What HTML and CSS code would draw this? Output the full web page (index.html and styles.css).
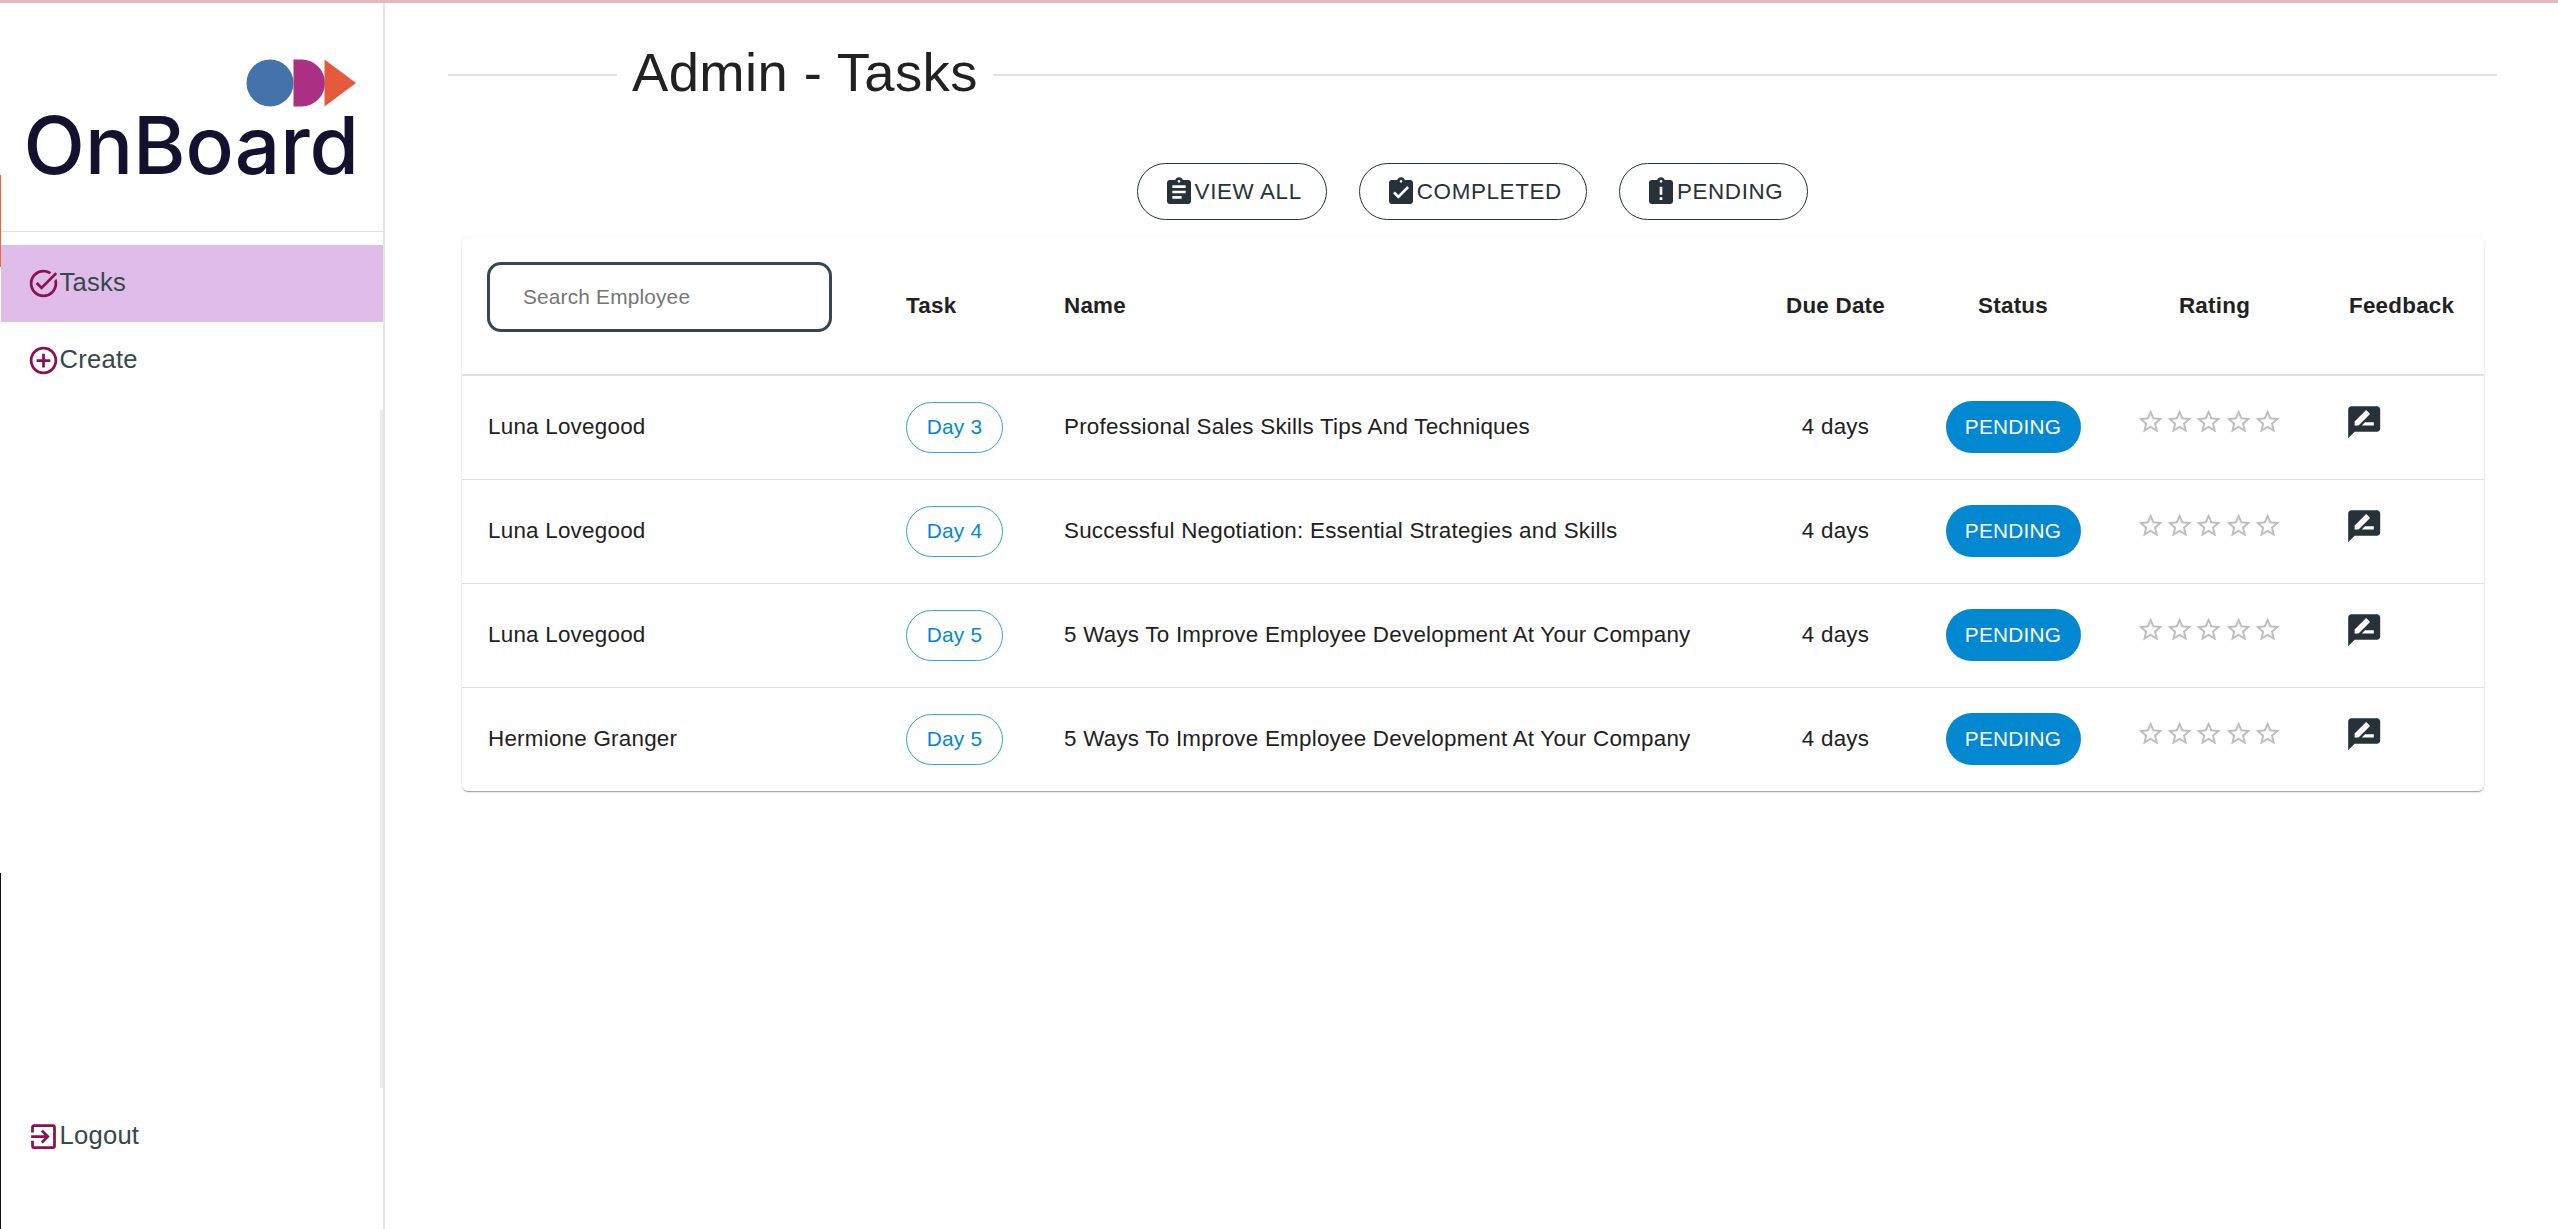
FILE: index.html
```html
<!DOCTYPE html>
<html lang="en">
<head>
<meta charset="utf-8">
<title>Admin - Tasks</title>
<link rel="stylesheet" href="styles.css">
</head>
<body>
<svg class="defs" aria-hidden="true">
  <symbol id="i-star" viewBox="0 0 24 24"><path d="M22 9.24l-7.19-.62L12 2 9.19 8.63 2 9.24l5.46 4.73L5.82 21 12 17.27 18.18 21l-1.63-7.03L22 9.24zM12 15.4l-3.76 2.27 1-4.28-3.32-2.88 4.38-.38L12 6.1l1.71 4.04 4.38.38-3.32 2.88 1 4.28L12 15.4z"/></symbol>
  <symbol id="i-review" viewBox="0 0 24 24"><path d="M20 2H4c-1.1 0-2 .9-2 2v18l4-4h14c1.1 0 2-.9 2-2V4c0-1.1-.9-2-2-2zM6 14v-2.47l6.88-6.88c.2-.2.51-.2.71 0l1.77 1.77c.2.2.2.51 0 .71L8.47 14H6zm12 0h-7.5l2-2H18v2z"/></symbol>
</svg>
<div class="app">
  <aside class="sidebar">
    <div class="logo">
      <svg class="logo-mark" viewBox="0 0 110 48" width="110" height="48">
        <circle cx="24" cy="24" r="23.5" fill="#4472aa"/>
        <path d="M47.5 .5h8a23.5 23.5 0 0 1 0 47h-8z" fill="#ab2f82"/>
        <path d="M78.5 .5L110 24 78.500 47.5z" fill="#e5593c"/>
      </svg>
      <div class="logo-word">OnBoard</div>
    </div>
    <nav class="nav">
      <a class="nav-item active">
        <svg class="nav-icon" viewBox="0 0 24 24"><path d="M22 5.18L10.59 16.6l-4.24-4.25 1.41-1.41 2.83 2.83 10-10L22 5.18zm-2.21 5.04c.13.57.21 1.17.21 1.78 0 4.42-3.58 8-8 8s-8-3.58-8-8 3.58-8 8-8c1.58 0 3.04.46 4.28 1.25l1.44-1.44C16.1 2.67 14.13 2 12 2 6.48 2 2 6.48 2 12s4.48 10 10 10 10-4.48 10-10c0-1.19-.22-2.33-.6-3.39l-1.61 1.61z"/></svg>
        <span class="nav-label">Tasks</span>
      </a>
      <a class="nav-item">
        <svg class="nav-icon" viewBox="0 0 24 24"><path d="M13 7h-2v4H7v2h4v4h2v-4h4v-2h-4V7zm-1-5C6.48 2 2 6.48 2 12s4.48 10 10 10 10-4.48 10-10S17.52 2 12 2zm0 18c-4.41 0-8-3.59-8-8s3.59-8 8-8 8 3.59 8 8-3.59 8-8 8z"/></svg>
        <span class="nav-label">Create</span>
      </a>
    </nav>
    <a class="nav-item logout">
      <svg class="nav-icon" viewBox="0 0 24 24"><path d="M10.09 15.59L11.5 17l5-5-5-5-1.41 1.41L12.67 11H3v2h9.67l-2.58 2.59zM19 3H5c-1.11 0-2 .9-2 2v4h2V5h14v14H5v-4H3v4c0 1.1.89 2 2 2h14c1.1 0 2-.9 2-2V5c0-1.1-.9-2-2-2z"/></svg>
      <span class="nav-label">Logout</span>
    </a>
  </aside>
  <main class="main">
    <header class="title-row">
      <span class="rule rule-left"></span>
      <h1 class="title">Admin - Tasks</h1>
      <span class="rule"></span>
    </header>
    <div class="filters">
      <button class="filter">
        <svg class="filter-icon" viewBox="0 0 24 24"><path d="M19 3h-4.18C14.4 1.84 13.3 1 12 1c-1.3 0-2.4.84-2.82 2H5c-1.1 0-2 .9-2 2v14c0 1.1.9 2 2 2h14c1.1 0 2-.9 2-2V5c0-1.1-.9-2-2-2zm-7 0c.55 0 1 .45 1 1s-.45 1-1 1-1-.45-1-1 .45-1 1-1zm2 14H7v-2h7v2zm3-4H7v-2h10v2zm0-4H7V7h10v2z"/></svg>
        <span>View All</span>
      </button>
      <button class="filter">
        <svg class="filter-icon" viewBox="0 0 24 24"><path d="M19 3h-4.18C14.4 1.84 13.3 1 12 1c-1.3 0-2.4.84-2.82 2H5c-1.1 0-2 .9-2 2v14c0 1.1.9 2 2 2h14c1.1 0 2-.9 2-2V5c0-1.1-.9-2-2-2zm-7 0c.55 0 1 .45 1 1s-.45 1-1 1-1-.45-1-1 .45-1 1-1zm-2 14l-4-4 1.41-1.41L10 14.17l6.59-6.59L18 9l-8 8z"/></svg>
        <span>Completed</span>
      </button>
      <button class="filter">
        <svg class="filter-icon" viewBox="0 0 24 24"><path d="M19 3h-4.18C14.4 1.84 13.3 1 12 1c-1.3 0-2.4.84-2.82 2H5c-1.1 0-2 .9-2 2v14c0 1.1.9 2 2 2h14c1.1 0 2-.9 2-2V5c0-1.1-.9-2-2-2zm-6 15h-2v-2h2v2zm0-4h-2V8h2v6zm-1-9c-.55 0-1-.45-1-1s.45-1 1-1 1 .45 1 1-.45 1-1 1z"/></svg>
        <span>Pending</span>
      </button>
    </div>
    <section class="card">
      <table class="tasks">
        <colgroup>
          <col class="c-emp"><col class="c-task"><col class="c-name"><col class="c-due"><col class="c-status"><col class="c-rating"><col class="c-feedback">
        </colgroup>
        <thead>
          <tr>
            <th><input class="search" type="text" placeholder="Search Employee"></th>
            <th>Task</th>
            <th>Name</th>
            <th class="center">Due Date</th>
            <th class="center">Status</th>
            <th class="center">Rating</th>
            <th class="feedback-head">Feedback</th>
          </tr>
        </thead>
        <tbody>
          <tr>
            <td>Luna Lovegood</td>
            <td><span class="chip">Day 3</span></td>
            <td>Professional Sales Skills Tips And Techniques</td>
            <td class="center">4 days</td>
            <td class="center"><span class="pill">PENDING</span></td>
            <td class="rating"><div class="stars"><svg><use href="#i-star"/></svg><svg><use href="#i-star"/></svg><svg><use href="#i-star"/></svg><svg><use href="#i-star"/></svg><svg><use href="#i-star"/></svg></div></td>
            <td class="feedback"><svg class="review"><use href="#i-review"/></svg></td>
          </tr>
          <tr>
            <td>Luna Lovegood</td>
            <td><span class="chip">Day 4</span></td>
            <td>Successful Negotiation: Essential Strategies and Skills</td>
            <td class="center">4 days</td>
            <td class="center"><span class="pill">PENDING</span></td>
            <td class="rating"><div class="stars"><svg><use href="#i-star"/></svg><svg><use href="#i-star"/></svg><svg><use href="#i-star"/></svg><svg><use href="#i-star"/></svg><svg><use href="#i-star"/></svg></div></td>
            <td class="feedback"><svg class="review"><use href="#i-review"/></svg></td>
          </tr>
          <tr>
            <td>Luna Lovegood</td>
            <td><span class="chip">Day 5</span></td>
            <td>5 Ways To Improve Employee Development At Your Company</td>
            <td class="center">4 days</td>
            <td class="center"><span class="pill">PENDING</span></td>
            <td class="rating"><div class="stars"><svg><use href="#i-star"/></svg><svg><use href="#i-star"/></svg><svg><use href="#i-star"/></svg><svg><use href="#i-star"/></svg><svg><use href="#i-star"/></svg></div></td>
            <td class="feedback"><svg class="review"><use href="#i-review"/></svg></td>
          </tr>
          <tr>
            <td>Hermione Granger</td>
            <td><span class="chip">Day 5</span></td>
            <td>5 Ways To Improve Employee Development At Your Company</td>
            <td class="center">4 days</td>
            <td class="center"><span class="pill">PENDING</span></td>
            <td class="rating"><div class="stars"><svg><use href="#i-star"/></svg><svg><use href="#i-star"/></svg><svg><use href="#i-star"/></svg><svg><use href="#i-star"/></svg><svg><use href="#i-star"/></svg></div></td>
            <td class="feedback"><svg class="review"><use href="#i-review"/></svg></td>
          </tr>
        </tbody>
      </table>
    </section>
  </main>
</div>
</body>
</html>
```

FILE: styles.css
```css
* { box-sizing: border-box; }
html, body { margin: 0; height: 1229px; overflow: hidden; }
body {
  background: #fff;
  color: #212121;
  font-family: "Liberation Sans", Arial, sans-serif;
}
.defs { width: 0; height: 0; position: absolute; }

.app {
  display: flex;
  height: 1229px;
  border-top: 3px solid #e4b8c0;
}

/* Sidebar */
.sidebar {
  position: relative;
  width: 385px;
  flex: none;
  display: flex;
  flex-direction: column;
  border-right: 2px solid #e4e4e4;
  padding-left: 1px;
  background: linear-gradient(#fff 172px, #f0643c 172px, #f0643c 264px, #fff 264px, #fff 870px, #111 870px) left top / 1px 100% no-repeat;
}
.sidebar::after {
  content: "";
  position: absolute;
  right: 0;
  top: 407px;
  width: 3px;
  height: 678px;
  background: #ececec;
}
.logo {
  height: 229px;
  flex: none;
  border-bottom: 1px solid #e0e0e0;
  display: flex;
  flex-direction: column;
  align-items: flex-end;
  padding: 56px 27px 0 0;
}
.logo-mark { display: block; }
.logo-word {
  font-family: Inter, "Liberation Sans", sans-serif;
  font-weight: 500;
  font-size: 80px;
  line-height: 64px;
  margin-right: -3px;
  color: #14112e;
  margin-top: 6px;
}
.nav { padding-top: 13px; flex: 1; }
.nav-item {
  display: flex;
  align-items: center;
  height: 76.8px;
  padding-left: 25.5px;
  font-size: 25.6px;
  letter-spacing: .24px;
  color: #37474f;
}
.nav-item.active { background: #e0bde8; }
.nav-icon {
  width: 33px;
  height: 33px;
  fill: #8c0f51;
  flex: none;
}
.nav-label { margin-bottom: 2px; }
.logout { margin-bottom: 54px; }

/* Main */
.main {
  flex: 1;
  min-width: 0;
  padding: 0 61px 0 63px;
}
.title-row {
  display: flex;
  align-items: flex-start;
  gap: 15px;
  height: 143px;
}
.rule {
  flex: 1;
  height: 2px;
  background: #e2e2e2;
  margin-top: 71px;
}
.rule-left { flex: none; width: 169px; }
.title {
  margin: 37px 0 0;
  font-size: 54.4px;
  line-height: 66px;
  letter-spacing: .4px;
  font-weight: 400;
  color: #212121;
}
.filters {
  display: flex;
  justify-content: center;
  gap: 32px;
  margin-top: 17px;
}
.filter {
  display: flex;
  align-items: center;
  height: 57px;
  padding: 0 24px 0 25px;
  border: 1px solid #263238;
  border-radius: 29px;
  background: #fff;
  color: #263238;
  font: 400 22.4px "Liberation Sans", Arial, sans-serif;
  letter-spacing: .64px;
  text-transform: uppercase;
}
.filter-icon { width: 32px; height: 32px; fill: #263238; flex: none; }

.card {
  margin: 17px 13px 0 14px;
  border-radius: 6px;
  background: #fff;
  box-shadow: 0 2px 1px -1px rgba(0,0,0,.2), 0 1px 1px 0 rgba(0,0,0,.14), 0 1px 3px 0 rgba(0,0,0,.12);
  overflow: hidden;
}
.tasks {
  width: 100%;
  table-layout: fixed;
  border-collapse: collapse;
  font-size: 22.4px;
  letter-spacing: .24px;
  color: #212121;
}
.c-emp { width: 418px; }
.c-task { width: 158px; }
.c-due { width: 151px; }
.c-status { width: 204px; }
.c-rating { width: 199px; }
.c-feedback { width: 170px; }

.tasks th {
  height: 138px;
  padding: 0 0 0 26px;
  text-align: left;
  font-weight: 700;
  border-bottom: 2px solid #e0e0e0;
  vertical-align: middle;
}
.tasks th.center, .tasks td.center { text-align: center; padding-left: 0; }
.tasks th.feedback-head { padding-left: 35px; }
.tasks td {
  height: 104px;
  padding: 0 0 0 26px;
  border-bottom: 1px solid #e0e0e0;
  vertical-align: middle;
}
.tasks tbody tr:last-child td { border-bottom: 0; }

.search {
  display: block;
  width: 345px;
  height: 70px;
  padding: 0 33px;
  margin: -17px 0 0 -1px;
  border: 3px solid #37474f;
  border-radius: 14px;
  outline: none;
  font: 400 20.8px "Liberation Sans", Arial, sans-serif;
  letter-spacing: .2px;
}
.search::placeholder { color: #757575; opacity: 1; }

.chip {
  display: inline-flex;
  align-items: center;
  justify-content: center;
  width: 97px;
  height: 51px;
  border: 1px solid #35a0da;
  border-radius: 26px;
  color: #0288d1;
  font-size: 20.8px;
}
.pill {
  display: inline-flex;
  align-items: center;
  justify-content: center;
  width: 135px;
  height: 52px;
  border-radius: 26px;
  background: #0288d1;
  color: #fff;
  font-size: 20.8px;
}
.tasks td.rating { padding-left: 21px; }
.stars {
  display: flex;
  margin-top: -10.5px;
}
.stars svg {
  width: 29.2px;
  height: 29.2px;
  fill: #bdbdbd;
  flex: none;
}
.tasks td.feedback { padding-left: 30.5px; }
.review {
  display: block;
  width: 38.4px;
  height: 38.4px;
  fill: #263238;
  margin-top: -10.5px;
}
```
